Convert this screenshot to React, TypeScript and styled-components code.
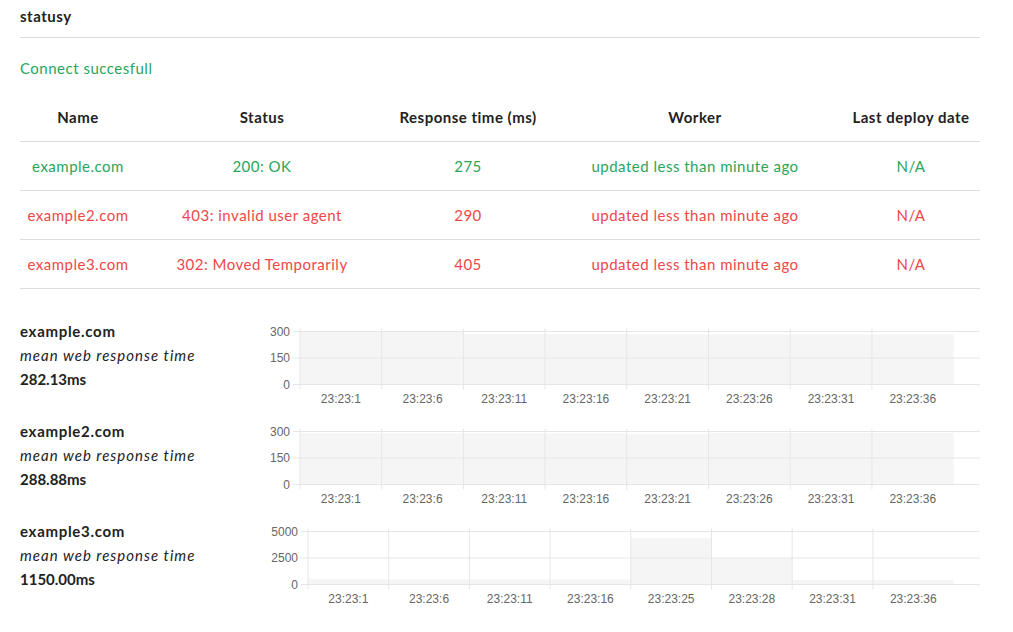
import React from 'react';
import styled, { createGlobalStyle } from 'styled-components';

const GlobalStyle = createGlobalStyle`
  html, body { margin: 0; padding: 0; background: #fff; }
  body {
    font-family: Lato, "Open Sans", sans-serif;
    color: #222;
    font-size: 15px;
    letter-spacing: 0.5px;
  }
`;

const GREEN = '#2aa55a';
const RED = '#ee4747';

const Page = styled.div`
  width: 960px;
  margin-left: 20px;
`;

const TopBar = styled.header`
  height: 38px;
  box-sizing: border-box;
  border-bottom: 1px solid #ddd;
  display: flex;
  align-items: center;
  padding-bottom: 6px;
  font-weight: 700;
  font-size: 15px;
`;

const Message = styled.div`
  margin-top: 20px;
  line-height: 20px;
  color: ${GREEN};
`;

const Table = styled.div`
  margin-top: 14px;
`;

const Row = styled.div<{ $head?: boolean; $ok?: boolean }>`
  display: grid;
  grid-template-columns: 116px 252px 160px 294px 138px;
  height: ${(p) => (p.$head ? 49 : 48)}px;
  border-bottom: 1px solid #ddd;
  align-items: center;
  font-weight: ${(p) => (p.$head ? 700 : 400)};
  color: ${(p) => (p.$head ? '#222' : p.$ok ? GREEN : RED)};
`;

const Cell = styled.div`
  text-align: center;
  white-space: nowrap;
`;

const Charts = styled.section`
  margin-top: 30px;
`;

const ChartRow = styled.div`
  display: grid;
  grid-template-columns: 245px 715px;
  height: 100px;
`;

const Info = styled.div`
  display: flex;
  flex-direction: column;
  line-height: 24px;
`;

const SiteName = styled.div`
  font-weight: 700;
  letter-spacing: 0.7px;
`;

const Caption = styled.div`
  font-style: italic;
  letter-spacing: 1px;
`;

const Mean = styled.div`
  font-weight: 700;
  letter-spacing: 0;
`;

const ChartSvg = styled.svg`
  display: block;
  font-family: "Liberation Sans", Arial, sans-serif;
  font-size: 12px;
  letter-spacing: 0;
`;

type ChartProps = {
  values: number[];
  max: number;
  left: number;
  catW: number;
  labels: string[];
};

function BarChart({ values, max, left, catW, labels }: ChartProps) {
  const top = 12.5;
  const bottom = 65.5;
  const right = 715;
  const h = bottom - top;
  const y = (v: number) => bottom - (v / max) * h;
  const ticks = [max, max / 2, 0];
  return (
    <ChartSvg width={715} height={100} viewBox="0 0 715 100">
      {values.map((v, i) => (
        <rect key={'b' + i} x={left + i * catW} y={y(v)} width={catW} height={bottom - y(v)} fill="#f5f5f5" />
      ))}
      {ticks.map((t) => (
        <g key={'h' + t}>
          <line x1={left - 7} x2={right} y1={y(t)} y2={y(t)} stroke="#e6e6e6" strokeWidth={1} />
          <text x={left - 10} y={y(t) + 4} textAnchor="end" fill="#666">
            {t}
          </text>
        </g>
      ))}
      {labels.map((l, i) => (
        <g key={'v' + i}>
          <line x1={left + i * catW} x2={left + i * catW} y1={9.5} y2={bottom + 5} stroke="#e6e6e6" strokeWidth={1} />
          <text x={left + i * catW + catW / 2} y={84} textAnchor="middle" fill="#666">
            {l}
          </text>
        </g>
      ))}
    </ChartSvg>
  );
}

const rows = [
  { name: 'example.com', status: '200: OK', time: '275', ok: true },
  { name: 'example2.com', status: '403: invalid user agent', time: '290', ok: false },
  { name: 'example3.com', status: '302: Moved Temporarily', time: '405', ok: false },
];

const labelsA = ['23:23:1', '23:23:6', '23:23:11', '23:23:16', '23:23:21', '23:23:26', '23:23:31', '23:23:36'];
const labelsC = ['23:23:1', '23:23:6', '23:23:11', '23:23:16', '23:23:25', '23:23:28', '23:23:31', '23:23:36'];

const charts = [
  { name: 'example.com', mean: '282.13ms', values: [297, 297, 287, 287, 283, 283, 283, 283], max: 300, left: 35, catW: 81.7, labels: labelsA },
  { name: 'example2.com', mean: '288.88ms', values: [289, 289, 289, 289, 285, 292, 292, 292], max: 300, left: 35, catW: 81.7, labels: labelsA },
  { name: 'example3.com', mean: '1150.00ms', values: [500, 480, 470, 470, 4373, 2480, 440, 440], max: 5000, left: 43, catW: 80.7, labels: labelsC },
];

export default function App() {
  return (
    <>
      <GlobalStyle />
      <Page>
        <TopBar>statusy</TopBar>
        <Message>Connect succesfull</Message>
        <Table>
          <Row $head>
            <Cell>Name</Cell>
            <Cell>Status</Cell>
            <Cell>Response time (ms)</Cell>
            <Cell>Worker</Cell>
            <Cell>Last deploy date</Cell>
          </Row>
          {rows.map((r) => (
            <Row key={r.name} $ok={r.ok}>
              <Cell>{r.name}</Cell>
              <Cell>{r.status}</Cell>
              <Cell>{r.time}</Cell>
              <Cell>updated less than minute ago</Cell>
              <Cell>N/A</Cell>
            </Row>
          ))}
        </Table>
        <Charts>
          {charts.map((c) => (
            <ChartRow key={c.name}>
              <Info>
                <SiteName>{c.name}</SiteName>
                <Caption>mean web response time</Caption>
                <Mean>{c.mean}</Mean>
              </Info>
              <BarChart values={c.values} max={c.max} left={c.left} catW={c.catW} labels={c.labels} />
            </ChartRow>
          ))}
        </Charts>
      </Page>
    </>
  );
}
